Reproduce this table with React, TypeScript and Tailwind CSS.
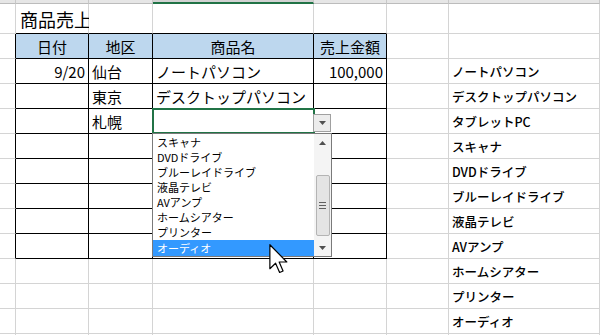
import React from 'react';

const FONT = { fontFamily: '"Noto Sans CJK JP", "Noto Sans", sans-serif' };

// column widths, including each cell's 1px right border
const colWidths = ['w-[16px]', 'w-[73px]', 'w-[64px]', 'w-[161px]', 'w-[73px]', 'w-[62px]', 'w-[151px]'];

const products = [
  'ノートパソコン',
  'デスクトップパソコン',
  'タブレットPC',
  'スキャナ',
  'DVDドライブ',
  'ブルーレイドライブ',
  '液晶テレビ',
  'AVアンプ',
  'ホームシアター',
  'プリンター',
  'オーディオ',
];

const dropdownItems = [
  'スキャナ',
  'DVDドライブ',
  'ブルーレイドライブ',
  '液晶テレビ',
  'AVアンプ',
  'ホームシアター',
  'プリンター',
  'オーディオ',
];

type CellProps = {
  col: number;
  row: number;
  height: string;
  children?: React.ReactNode;
};

// rows 1..9 make up the bordered sales table (header + 8 data rows)
function inTable(row: number) {
  return row >= 1 && row <= 9;
}

function Cell({ col, row, height, children }: CellProps) {
  const rightBlack = inTable(row) && col <= 4;
  const bottomBlack = row >= 0 && row <= 9 && col >= 1 && col <= 4;
  const headerFill = row === 1 && col >= 1 && col <= 4;
  return (
    <div
      className={`relative shrink-0 box-border border-r border-b ${colWidths[col]} ${height} ${
        rightBlack ? 'border-r-black' : 'border-r-[#d4d4d4]'
      } ${bottomBlack ? 'border-b-black' : 'border-b-[#d4d4d4]'} ${headerFill ? 'bg-[#bdd7ee]' : 'bg-white'}`}
    >
      {children}
    </div>
  );
}

function DropdownArrow({ up = false }: { up?: boolean }) {
  return (
    <svg width="7" height="4" viewBox="0 0 7 4">
      {up ? <path d="M0 4 L3.5 0 L7 4 Z" fill="#505050" /> : <path d="M0 0 L7 0 L3.5 4 Z" fill="#505050" />}
    </svg>
  );
}

function DropdownList() {
  return (
    <>
      {/* active cell outline */}
      <div className="absolute -left-px -top-px w-[163px] h-[26px] border-2 border-[#217346] pointer-events-none z-10" />
      {/* in-cell list button */}
      <div className="absolute left-[160px] top-[5px] w-[18px] h-[18px] bg-[#ececec] border border-[#a0a0a0] flex items-center justify-center z-10">
        <DropdownArrow />
      </div>
      {/* open list */}
      <div className="absolute -left-px top-[24px] w-[180px] h-[124px] bg-white border border-[#7a7a7a] flex z-10">
        <div className="flex-1 flex flex-col pt-px">
          {dropdownItems.map((item, i) => (
            <div
              key={item}
              className={`h-[15px] pl-1 flex items-center text-[11px] leading-none ${
                i === dropdownItems.length - 1 ? 'bg-[#3399ff] text-white h-[16px]' : 'text-black'
              }`}
            >
              {item}
            </div>
          ))}
        </div>
        <div className="w-[17px] bg-[#f4f4f4] flex flex-col items-center">
          <div className="h-[17px] w-full flex items-center justify-center">
            <DropdownArrow up />
          </div>
          <div className="mt-[24px] w-[14px] h-[61px] bg-[#e4e4e4] border border-[#b4b4b4] rounded-[2px] flex flex-col items-center justify-center gap-[2px]">
            <div className="w-[7px] h-px bg-[#606060]" />
            <div className="w-[7px] h-px bg-[#606060]" />
            <div className="w-[7px] h-px bg-[#606060]" />
          </div>
          <div className="mt-auto h-[17px] w-full flex items-center justify-center">
            <DropdownArrow />
          </div>
        </div>
      </div>
    </>
  );
}

function Text({ align = 'left', size = 'text-[15px]', children }: { align?: string; size?: string; children: React.ReactNode }) {
  const justify = align === 'right' ? 'justify-end pr-[3px]' : align === 'center' ? 'justify-center' : 'justify-start pl-[3px]';
  return <div className={`h-full flex items-center ${justify} ${size} leading-none text-black whitespace-nowrap`}>{children}</div>;
}

export default function App() {
  const headers = ['日付', '地区', '商品名', '売上金額'];
  const data: Record<number, [string, string, string, string]> = {
    2: ['9/20', '仙台', 'ノートパソコン', '100,000'],
    3: ['', '東京', 'デスクトップパソコン', ''],
    4: ['', '札幌', '', ''],
  };

  const rows = Array.from({ length: 14 }, (_, r) => r);

  return (
    <div className="w-[600px] h-[335px] overflow-hidden bg-white" style={FONT}>
      {/* column header strip */}
      <div className="flex h-[4px]">
        {colWidths.map((w, c) => (
          <div
            key={c}
            className={`shrink-0 box-border h-[4px] border-r border-r-[#c8c8c8] border-b ${w} ${
              c === 3 ? 'bg-[#d2d2d2] border-b-2 border-b-[#217346]' : 'bg-[#e6e6e6] border-b-[#bcbcbc]'
            }`}
          />
        ))}
      </div>

      {rows.map((r) => {
        const h = r === 0 ? 'h-[30px]' : 'h-[25px]';
        return (
          <div key={r} className="flex">
            {colWidths.map((_, c) => {
              let content: React.ReactNode = null;
              if (r === 0 && c === 1) {
                content = (
                  <div className="absolute left-[4px] top-0 h-full flex items-center text-[18px] leading-none whitespace-nowrap">
                    商品売上
                  </div>
                );
              } else if (r === 1 && c >= 1 && c <= 4) {
                content = <Text align="center">{headers[c - 1]}</Text>;
              } else if (data[r] && c >= 1 && c <= 4) {
                const v = data[r][c - 1];
                if (v) content = <Text align={c === 1 || c === 4 ? 'right' : 'left'}>{v}</Text>;
              } else if (c === 6 && r >= 2 && r <= 12) {
                content = (
                  <Text size="text-[12.5px] font-medium">
                    <span className="pt-[3px]">{products[r - 2]}</span>
                  </Text>
                );
              }
              return (
                <Cell key={c} col={c} row={r} height={h}>
                  {content}
                  {r === 4 && c === 3 && <DropdownList />}
                </Cell>
              );
            })}
          </div>
        );
      })}

      {/* mouse pointer */}
      <svg className="absolute left-[269px] top-[244px] z-20" width="19" height="30" viewBox="0 0 12.5 20">
        <path
          d="M0.5 0.5 L0.5 16.5 L4.3 12.8 L7 19 L9.3 18 L6.7 12 L11.8 12 Z"
          fill="white"
          stroke="black"
          strokeWidth="0.8"
          strokeLinejoin="round"
        />
      </svg>
    </div>
  );
}
